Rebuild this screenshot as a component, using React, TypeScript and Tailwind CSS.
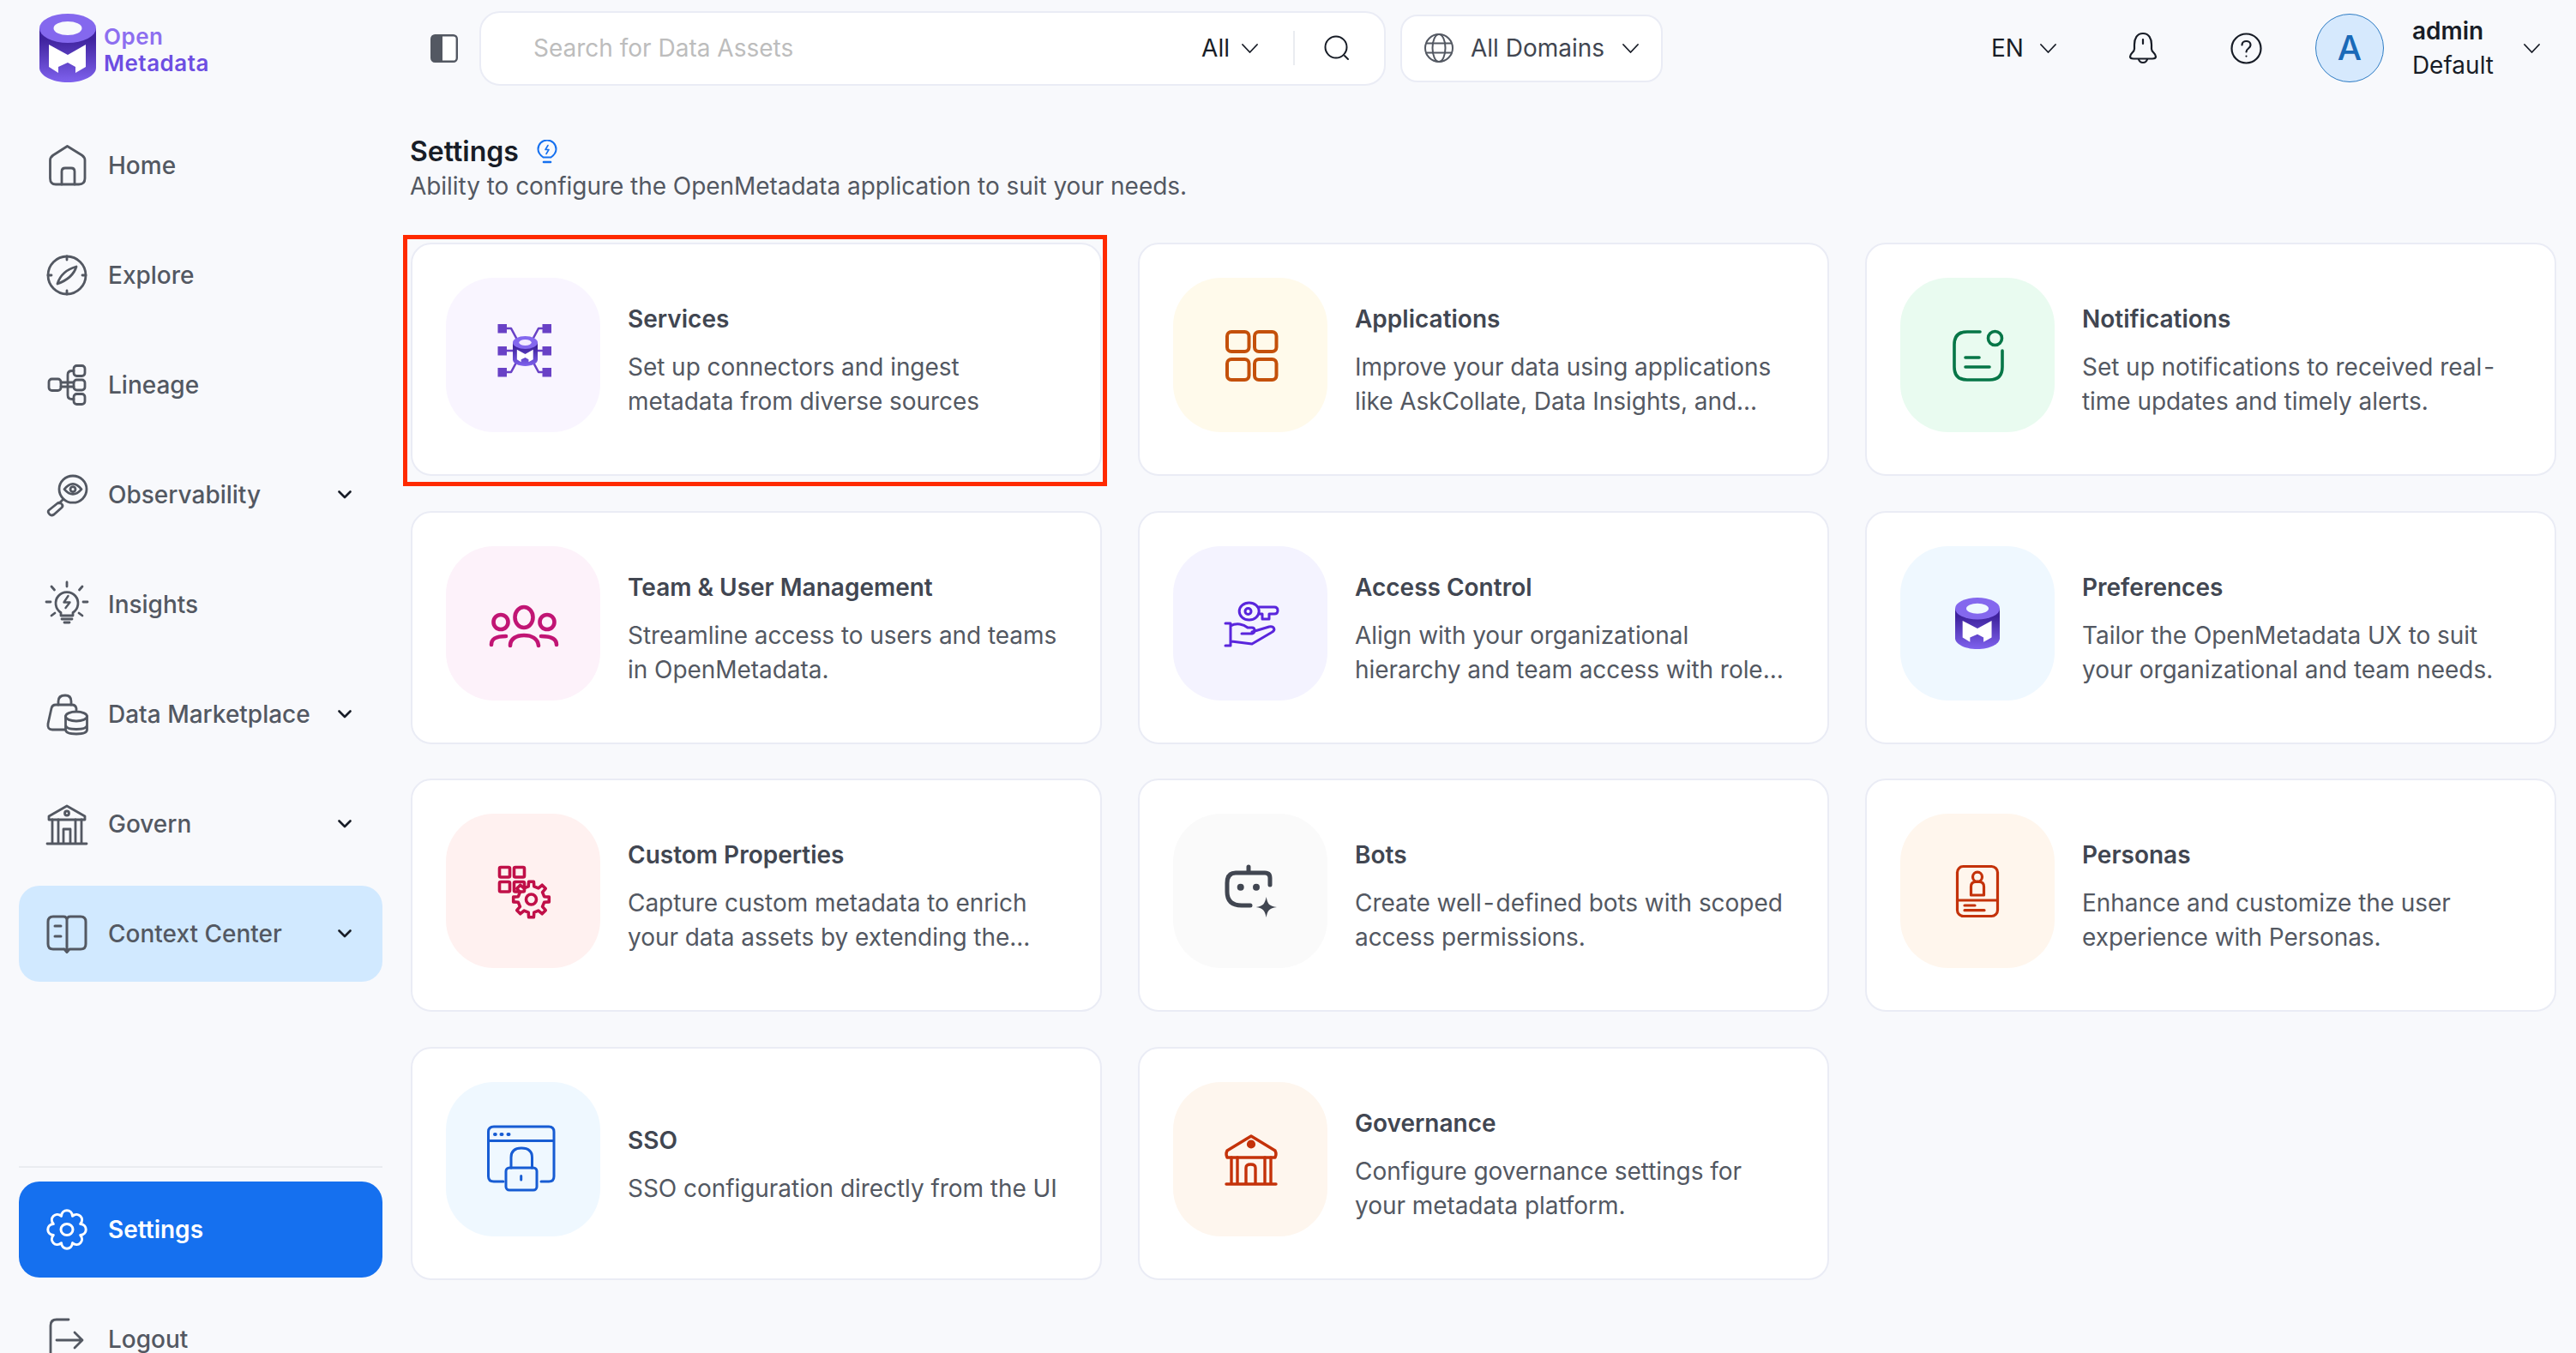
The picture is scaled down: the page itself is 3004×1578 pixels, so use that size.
import React from "react";

const pt = (cx: number, cy: number, r: number, a: number) => `${(cx + r * Math.cos(a)).toFixed(2)} ${(cy + r * Math.sin(a)).toFixed(2)}`;

function scallop(cx: number, cy: number, R: number, r: number, n: number) {
  const s = Math.PI / n;
  let d = `M${pt(cx, cy, r, -Math.PI / 2 - s)}`;
  for (let i = 0; i < n; i++) {
    const a = -Math.PI / 2 + (i * 2 * Math.PI) / n;
    d += ` C${pt(cx, cy, R * 1.14, a - s * 0.6)} ${pt(cx, cy, R * 1.14, a + s * 0.6)} ${pt(cx, cy, r, a + s)}`;
  }
  return d + "Z";
}

function cog(cx: number, cy: number, R: number, r: number, n: number) {
  const s = Math.PI / n;
  let d = "";
  for (let i = 0; i < n; i++) {
    const a = -Math.PI / 2 + (i * 2 * Math.PI) / n;
    d += `${i ? "L" : "M"}${pt(cx, cy, r, a - s * 0.55)} L${pt(cx, cy, R, a - s * 0.35)} L${pt(cx, cy, R, a + s * 0.35)} L${pt(cx, cy, r, a + s * 0.55)} `;
  }
  return d + "Z";
}

function LogoShape({ id, hole = "#f8f9fc" }: { id: string; hole?: string }) {
  return (
    <>
      <defs>
        <linearGradient id={id} x1="0" y1="0" x2="0" y2="1">
          <stop offset="0.2" stopColor="#3f239e" />
          <stop offset="1" stopColor="#7f62ee" />
        </linearGradient>
      </defs>
      <path d="M0 17V63C0 72.4 14.8 80 33 80S66 72.4 66 63V17Z" fill={`url(#${id})`} />
      <ellipse cx="33" cy="17" rx="33" ry="17" fill="#8468ee" />
      <ellipse cx="33" cy="17" rx="16.5" ry="8" fill={hole} />
      <path d="M11 36L33 48L54 36V62L42 69V62L33 57L22 62V69L11 62Z" fill="#fff" />
    </>
  );
}

function Chev({ thick }: { thick?: boolean }) {
  return thick ? (
    <svg viewBox="0 0 16 10" className="h-[10px] w-[16px] shrink-0" fill="none" stroke="#181d27" strokeWidth="2.6" strokeLinecap="round" strokeLinejoin="round">
      <path d="M1.5 1.5L8 8L14.5 1.5" />
    </svg>
  ) : (
    <svg viewBox="0 0 19 11" className="h-[11px] w-[19px] shrink-0" fill="none" stroke="#181d27" strokeWidth="1.8" strokeLinecap="round" strokeLinejoin="round">
      <path d="M1 1L9.5 10L18 1" />
    </svg>
  );
}

const side = {
  viewBox: "0 0 48 48",
  className: "h-[48px] w-[48px] shrink-0 overflow-visible",
  fill: "none",
  stroke: "#535862",
  strokeWidth: 2.8,
  strokeLinecap: "round" as const,
  strokeLinejoin: "round" as const,
};

const sideIcons: Record<string, React.ReactNode> = {
  Home: (
    <svg {...side}>
      <path d="M24.5 1.5L41.5 12Q45 14.5 45 18V39Q45 46 38 46H11Q4.5 46 4.5 39V18Q4.5 14.5 8 12Z" />
      <path d="M18 46V31Q18 27 22 27H29Q33 27 33 31V46" />
    </svg>
  ),
  Explore: (
    <svg {...side}>
      <circle cx="24" cy="24" r="22" />
      <path d="M35 14C32 24 24 30 13 34C16 24 24 17 35 14Z" />
      <path d="M24 2V6M24 42V46M2 24H6M42 24H46" />
    </svg>
  ),
  Lineage: (
    <svg {...side}>
      <rect x="3" y="17" width="14" height="13.5" rx="3.5" />
      <rect x="32" y="1.5" width="13" height="12" rx="3.5" />
      <rect x="32" y="18" width="13" height="12" rx="3.5" />
      <rect x="32" y="34.5" width="13" height="12" rx="3.5" />
      <path d="M17 21H32M17 26H32M32 7.5H30Q25 7.5 25 12V36Q25 40.5 30 40.5H32" />
    </svg>
  ),
  Observability: (
    <svg {...side}>
      <ellipse cx="31" cy="17.6" rx="16" ry="15.6" />
      <path d="M21 17.6Q31 5 41 17.6Q31 29 21 17.6Z" />
      <circle cx="31" cy="17.6" r="3" />
      <path d="M20 29L15 34" />
      <path d="M3 42L13 34Q16 32 18 35Q20 37 18 39L9 47Q6 49 4 47Q1 44 3 42Z" />
    </svg>
  ),
  Insights: (
    <svg {...side}>
      <path d="M17 33.5A13 13 0 1 1 31 33.5V37H17Z" />
      <path d="M18 41H30M21 45H27M24 -2V3M6 3L9.5 7M42 3L38.5 7M0 21H5M43 21H48M6 37L10 34M42 37L38 34" />
      <path d="M25.5 14L20.5 21.5H27.5L22.5 28" strokeWidth="2.4" />
    </svg>
  ),
  "Data Marketplace": (
    <svg {...side}>
      <path d="M21 42H7Q1 42 2 35L6 17Q7 13 11 13H30Q34 13 35 17V19" />
      <path d="M14 13V9Q14 2 22 2Q29 2 29 9V13" />
      <ellipse cx="35" cy="26.5" rx="12.5" ry="5.5" />
      <path d="M22.5 26.5V42Q22.5 47 35 47Q47.5 47 47.5 42V26.5M22.5 36.5Q22.5 41.5 35 41.5Q47.5 41.5 47.5 36.5" />
    </svg>
  ),
  Govern: (
    <svg {...side}>
      <path d="M24 3L45 15V19H3V15Z" />
      <circle cx="24" cy="11.5" r="2.5" />
      <path d="M1 47H47M7 19V47M14 19V47M34 19V47M41 19V47M20 47V30H28V47" />
    </svg>
  ),
  "Context Center": (
    <svg {...side} strokeWidth={3}>
      <path d="M21 42H8Q2 42 2 36V10Q2 4 8 4H20Q24 4 24 8V44M24 8Q24 4 28 4H40Q46 4 46 10V36Q46 42 40 42H27L24 45.5L21 42" />
      <path d="M10 15H17M10 27H17" />
    </svg>
  ),
  Settings: (
    <svg {...side} stroke="#fff" strokeWidth={3}>
      <path d={scallop(24, 24, 22, 17, 8)} />
      <ellipse cx="24" cy="24" rx="7" ry="6.5" />
    </svg>
  ),
  Logout: (
    <svg {...side}>
      <path d="M26 1H12Q5 1 5 8V48" />
      <path d="M12 25H42M33 16L42 25L33 34" />
    </svg>
  ),
};

const tileSvg = { viewBox: "0 0 100 100", className: "h-[100px] w-[100px] overflow-visible", fill: "none", strokeLinecap: "round" as const, strokeLinejoin: "round" as const };

const tileIcons: Record<string, React.ReactNode> = {
  Services: (
    <svg {...tileSvg} stroke="#6941c6" strokeWidth="2.6">
      <g fill="#6941c6" stroke="none">
        <rect x="20.5" y="14" width="10.5" height="10.5" />
        <rect x="72.5" y="14" width="10.5" height="10.5" />
        <rect x="20.5" y="40" width="10.5" height="10.5" />
        <rect x="72.5" y="40" width="10.5" height="10.5" />
        <rect x="20.5" y="65" width="10.5" height="10.5" />
        <rect x="72.5" y="65" width="10.5" height="10.5" />
      </g>
      <path d="M31 19H36L43 32M72 19H68L61 32M31 45H38M67 45H72M31 70H36L43 57M72 70H68L61 57" />
      <svg x="38" y="28" width="29" height="35" viewBox="0 0 66 80" preserveAspectRatio="none" strokeWidth="0">
        <LogoShape id="lg2" hole="#f2ecff" />
      </svg>
    </svg>
  ),
  Applications: (
    <svg {...tileSvg} stroke="#c4500a" strokeWidth="4">
      <rect x="23" y="23" width="25.5" height="23" rx="5" />
      <rect x="55" y="23" width="25.5" height="23" rx="5" />
      <rect x="23" y="55" width="25.5" height="24" rx="5" />
      <rect x="55" y="55" width="25.5" height="24" rx="5" />
    </svg>
  ),
  Notifications: (
    <svg {...tileSvg} stroke="#067647" strokeWidth="3.6">
      <path d="M53 23H38Q23 23 23 38V64Q23 79 38 79H64Q79 79 79 64V45" />
      <circle cx="70.5" cy="30.5" r="8" />
      <path d="M36 53H52M36 64H64" />
    </svg>
  ),
  "Team & User Management": (
    <svg {...tileSvg} stroke="#c11574" strokeWidth="4.6">
      <ellipse cx="51" cy="43" rx="10.5" ry="12" />
      <circle cx="24" cy="48.5" r="8.5" />
      <circle cx="78" cy="48.5" r="8.5" />
      <path d="M35 76C35 68 42 64 51 64C60 64 67 68 68 76M13 75C13 68 18 65 30 65M71 65C83 65 89 68 89 75" />
    </svg>
  ),
  "Access Control": (
    <svg {...tileSvg} stroke="#5925dc" strokeWidth="3">
      <ellipse cx="48.7" cy="36" rx="11.5" ry="10" />
      <circle cx="47.5" cy="36" r="3.5" />
      <path d="M60 31H78Q82 31 82 35Q82 39 78 39H72V45H64V39H60" />
      <path d="M21 50H27M21 76H27M27 50V76M27 53C34 49 42 51 47 55H52C56 55 56 61 52 62H40M52 60L72 54C78 53 80 58 75 60.5L52 74L28 71" />
    </svg>
  ),
  Preferences: (
    <svg viewBox="0 0 66 80" className="h-[60px] w-[52px]" preserveAspectRatio="none">
      <LogoShape id="lg3" hole="#eff8ff" />
    </svg>
  ),
  "Custom Properties": (
    <svg {...tileSvg} stroke="#c01048" strokeWidth="3.6">
      <rect x="22.5" y="22.5" width="12" height="11.5" rx="1.5" />
      <rect x="39.5" y="22.5" width="12" height="11.5" rx="1.5" />
      <rect x="22.5" y="39.5" width="12" height="11.5" rx="1.5" />
      <rect x="39.5" y="39.5" width="12" height="11.5" rx="1.5" />
      <path d={cog(59.5, 60, 21, 15.5, 8)} />
      <circle cx="59.5" cy="60" r="6" />
    </svg>
  ),
  Bots: (
    <svg {...tileSvg} stroke="#414651" strokeWidth="5">
      <path d="M73 43V35Q73 29 67 29H33Q23 29 23 41V51Q23 67 40 67H50M48 22V29" />
      <circle cx="38.7" cy="45.7" r="4" fill="#414651" stroke="none" />
      <circle cx="57" cy="45.7" r="4" fill="#414651" stroke="none" />
      <path d="M68.7 57C70 65 72 68 81 69C72 70 70 73 68.7 81C67 73 65 70 56.7 69C65 68 67 65 68.7 57Z" fill="#414651" stroke="none" />
    </svg>
  ),
  Personas: (
    <svg {...tileSvg} stroke="#c4320a" strokeWidth="3.2">
      <rect x="26.5" y="21.5" width="47" height="58" rx="7" />
      <path d="M26.5 61H73.5" />
      <circle cx="50" cy="33.7" r="5.5" />
      <path d="M42.5 55V45Q42.5 39.5 48 39.5H52Q57.5 39.5 57.5 45V55Z" />
      <path d="M35 67H47M35 72.7H58" />
    </svg>
  ),
  SSO: (
    <svg {...tileSvg} stroke="#175cd3" strokeWidth="3">
      <path d="M27 76H16Q9.5 76 9.5 70V18Q9.5 12 16 12H80Q86 12 86 18V70Q86 76 80 76H71M9.5 28.5H86" />
      <path d="M17 21H17.8M24.5 21H25.5M32.5 21H33.5" strokeWidth="4" />
      <rect x="30" y="60" width="36" height="26" rx="4" />
      <path d="M36 60V48Q36 37 48 37Q60.5 37 60.5 48V60M47.7 69.5V74" />
    </svg>
  ),
  Governance: (
    <svg {...tileSvg} stroke="#c4320a" strokeWidth="3.4">
      <path d="M51 23L79 40Q81 44 79 48H23Q21 44 23 40Z" />
      <circle cx="51" cy="32.5" r="3.4" fill="#c4320a" />
      <path d="M22 79H80M28 48V79M35 48V79M67 48V79M74 48V79M45 79V60Q45 56 50.5 56Q56 56 56 60V79" />
    </svg>
  ),
};

const cards: { t: string; bg: string; d: string[] }[] = [
  { t: "Services", bg: "bg-[#f9f5ff]", d: ["Set up connectors and ingest", "metadata from diverse sources"] },
  { t: "Applications", bg: "bg-[#fffaeb]", d: ["Improve your data using applications", "like AskCollate, Data Insights, and..."] },
  { t: "Notifications", bg: "bg-[#e9fbf0]", d: ["Set up notifications to received real-", "time updates and timely alerts."] },
  { t: "Team & User Management", bg: "bg-[#fdf2fa]", d: ["Streamline access to users and teams", "in OpenMetadata."] },
  { t: "Access Control", bg: "bg-[#f4f3ff]", d: ["Align with your organizational", "hierarchy and team access with role..."] },
  { t: "Preferences", bg: "bg-[#eff8ff]", d: ["Tailor the OpenMetadata UX to suit", "your organizational and team needs."] },
  { t: "Custom Properties", bg: "bg-[#fff1f0]", d: ["Capture custom metadata to enrich", "your data assets by extending the..."] },
  { t: "Bots", bg: "bg-[#fafafa]", d: ["Create well-defined bots with scoped", "access permissions."] },
  { t: "Personas", bg: "bg-[#fff6ed]", d: ["Enhance and customize the user", "experience with Personas."] },
  { t: "SSO", bg: "bg-[#eff8ff]", d: ["SSO configuration directly from the UI"] },
  { t: "Governance", bg: "bg-[#fef6ee]", d: ["Configure governance settings for", "your metadata platform."] },
];

function NavItem({ label, chev, active, primary }: { label: string; chev?: boolean; active?: boolean; primary?: boolean }) {
  return (
    <div
      className={`flex h-[112px] items-center gap-[24px] rounded-[24px] pl-[32px] pr-[36px] text-[28px] ${
        primary ? "bg-[#1570ef] font-semibold text-white" : active ? "bg-[#d1e9ff] font-medium text-[#535862]" : "font-medium text-[#535862]"
      }`}
    >
      {sideIcons[label]}
      <span className="whitespace-nowrap">{label}</span>
      {chev && (
        <span className="ml-auto">
          <Chev thick />
        </span>
      )}
    </div>
  );
}

function Line({ text }: { text: string }) {
  const parts = text.split("-");
  return (
    <div className="whitespace-nowrap text-[28px] leading-[40px] tracking-[-0.05px] text-[#535862]">
      {parts.map((p, i) => (
        <React.Fragment key={i}>
          {i > 0 && <span className="mx-[2px]">-</span>}
          {p}
        </React.Fragment>
      ))}
    </div>
  );
}

function Card({ t, bg, d }: { t: string; bg: string; d: string[] }) {
  return (
    <div className="relative flex h-[272px] items-start gap-[32px] rounded-[24px] border-2 border-[#eaecf5] bg-white pl-[39px] pt-[39px]">
      <div className={`flex h-[180px] w-[180px] shrink-0 items-center justify-center rounded-[56px] ${bg}`}>{tileIcons[t]}</div>
      <div className="flex h-[180px] flex-col justify-center pt-[12px]">
        <div className="mb-[16px] whitespace-nowrap text-[28px] font-semibold leading-[40px] text-[#414651]">{t}</div>
        {d.map((l) => (
          <Line key={l} text={l} />
        ))}
      </div>
      {t === "Services" && <div className="absolute -bottom-[14px] -left-[11px] -right-[8px] -top-[11px] border-[5px] border-[#ff2a00]" />}
    </div>
  );
}

export default function App() {
  return (
    <div className="flex h-[1578px] w-[3004px] overflow-hidden bg-[#f8f9fc] font-['Inter',sans-serif]">
      <aside className="flex h-[1618px] w-[478px] shrink-0 flex-col pr-[32px]">
        <div className="flex h-[137px] items-start pl-[46px] pt-[16px]">
          <svg viewBox="0 0 66 80" className="h-[80px] w-[66px]">
            <LogoShape id="lg1" />
          </svg>
          <div className="ml-[9px] mt-[11px] text-[26px] font-semibold leading-[31px] tracking-[0.5px]">
            <div className="text-[#8d6ff0]">Open</div>
            <div className="text-[#6d4ee2]">Metadata</div>
          </div>
        </div>
        <nav className="flex flex-1 flex-col gap-[16px] pl-[22px]">
          <NavItem label="Home" />
          <NavItem label="Explore" />
          <NavItem label="Lineage" />
          <NavItem label="Observability" chev />
          <NavItem label="Insights" />
          <NavItem label="Data Marketplace" chev />
          <NavItem label="Govern" chev />
          <NavItem label="Context Center" chev active />
        </nav>
        <div className="ml-[22px] flex flex-col gap-[16px]">
          <div className="h-[2px] bg-[#eaecf0]" />
          <NavItem label="Settings" primary />
          <NavItem label="Logout" />
        </div>
      </aside>

      <main className="flex min-w-0 flex-1 flex-col">
        <header className="flex h-[112px] shrink-0 items-center pl-[24px] pr-[42px]">
          <svg viewBox="0 0 32 33" className="h-[33px] w-[32px] shrink-0">
            <rect x="1.2" y="1.2" width="29.6" height="30.6" rx="4" fill="#fff" stroke="#535862" strokeWidth="2.4" />
            <path d="M5 1.2H14V31.8H5Q1.2 31.8 1.2 28V5Q1.2 1.2 5 1.2Z" fill="#535862" />
          </svg>
          <div className="ml-[25px] flex h-[87px] w-[1057px] shrink-0 items-center rounded-[24px] border-2 border-[#eaecf5] bg-white pl-[61px] pr-[40px]">
            <input
              readOnly
              placeholder="Search for Data Assets"
              className="min-w-0 flex-1 bg-transparent text-[28px] text-[#181d27] outline-none placeholder:text-[#bdbdbd]"
            />
            <span className="text-[28px] text-[#181d27]">All</span>
            <span className="ml-[14px]">
              <Chev />
            </span>
            <div className="ml-[41px] h-[40px] w-[2px] bg-[#eaecf0]" />
            <svg viewBox="0 0 30 30" className="ml-[34px] h-[30px] w-[30px] shrink-0" fill="none" stroke="#181d27" strokeWidth="2" strokeLinecap="round">
              <circle cx="14" cy="14" r="12.5" />
              <path d="M24 24L28 28" />
            </svg>
          </div>
          <div className="ml-[17px] flex h-[79px] w-[306px] shrink-0 items-center rounded-[20px] border-2 border-[#eaecf5] bg-white pl-[26px]">
            <svg viewBox="0 0 34 34" className="h-[34px] w-[34px] shrink-0" fill="none" stroke="#535862" strokeWidth="2">
              <circle cx="17" cy="17" r="16" />
              <ellipse cx="17" cy="17" rx="7.5" ry="16" />
              <path d="M2.5 11.5H31.5M2.5 22.5H31.5" />
            </svg>
            <span className="ml-[20px] whitespace-nowrap text-[28px] text-[#414651]">All Domains</span>
            <span className="ml-[21px]">
              <Chev />
            </span>
          </div>
          <div className="ml-auto flex items-center">
            <span className="text-[28px] text-[#181d27]">EN</span>
            <span className="ml-[19px]">
              <Chev />
            </span>
            <svg viewBox="0 0 32 36" className="ml-[85px] h-[36px] w-[32px] shrink-0 overflow-visible" fill="none" stroke="#181d27" strokeWidth="2.2" strokeLinecap="round" strokeLinejoin="round">
              <path d="M16 1C9 1 6 7 6 14V19C6 23 1 24 1 28C1 30 3 30.5 5 30.5H27C29 30.5 31 30 31 28C31 24 26 23 26 19V14C26 7 23 1 16 1Z" />
              <path d="M11 31Q12 35 16 35Q20 35 21 31M16 8V13" />
            </svg>
            <svg viewBox="0 0 37 37" className="ml-[86px] h-[37px] w-[37px] shrink-0" fill="none" stroke="#181d27" strokeWidth="2.2" strokeLinecap="round">
              <circle cx="18.5" cy="18.5" r="17" />
              <path d="M13.5 14.5C13.5 8.5 23.5 8.5 23.5 14.5C23.5 18.5 18.5 18.5 18.5 22.5M18.5 27.5V27.6" />
            </svg>
            <div className="ml-[62px] flex h-[80px] w-[80px] shrink-0 items-center justify-center rounded-full border-[1.5px] border-[#2e7cc4] bg-[#d6e9fd] text-[40px] font-medium text-[#1a6ab8]">A</div>
            <div className="ml-[33px] text-[28px] leading-[40px] text-[#181d27]">
              <div className="font-semibold">admin</div>
              <div>Default</div>
            </div>
            <span className="ml-[35px]">
              <Chev />
            </span>
          </div>
        </header>

        <div className="mt-[45px] flex h-[40px] items-center gap-[21px]">
          <h1 className="text-[32px] font-semibold leading-[40px] text-[#181d27]">Settings</h1>
          <svg viewBox="0 0 24 28" className="h-[28px] w-[24px]" fill="none" stroke="#1570ef" strokeWidth="2" strokeLinecap="round" strokeLinejoin="round">
            <path d="M7.5 20.5C4 18 1.5 15 1.5 11A10.5 10.5 0 0 1 22.5 11C22.5 15 20 18 16.5 20.5Z" />
            <path d="M13 6.5L10 11.5H14L11 16.5" strokeWidth="1.6" />
            <path d="M8 26H16" strokeWidth="2.6" />
          </svg>
        </div>
        <p className="text-[28px] leading-[40px] tracking-[-0.05px] text-[#535862]">Ability to configure the OpenMetadata application to suit your needs.</p>

        <div className="ml-[1px] mr-[23px] mt-[46px] grid grid-cols-3 gap-x-[42px] gap-y-[40.7px]">
          {cards.map((c) => (
            <Card key={c.t} {...c} />
          ))}
        </div>
      </main>
    </div>
  );
}
